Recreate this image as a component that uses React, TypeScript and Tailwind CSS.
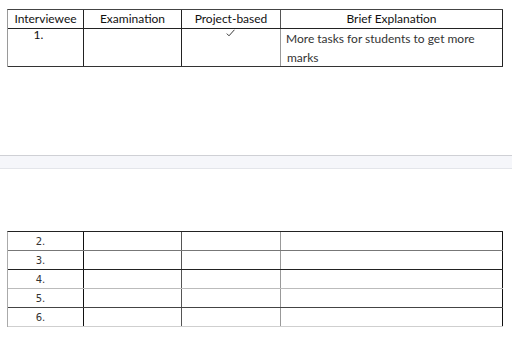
import React from "react";

const top = { fontFamily: "Lato, 'Open Sans', sans-serif" };
const dv = { fontFamily: "'DejaVu Sans', Verdana, sans-serif" };

export default function App() {
  const hRow = "h-[18px] flex items-center justify-center text-[12px] leading-[18px] text-[#111]";
  const rows: { n: string; b: string }[] = [
    { n: "2.", b: "border-b-[#777]" },
    { n: "3.", b: "border-b-[#222]" },
    { n: "4.", b: "border-b-[#bbb]" },
    { n: "5.", b: "border-b-[#444]" },
    { n: "6.", b: "border-b-[#cfcfcf]" },
  ];
  return (
    <div className="w-[512px] h-[339px] bg-white overflow-hidden relative">
      <div className="pt-[9px] pl-[7px]" style={top}>
        <div className="w-[496px] border-t border-l border-t-[#444] border-l-[#9a9a9a]">
          <div className="flex border-b border-b-[#222]">
            <div className={`w-[76px] border-r border-r-[#222] ${hRow}`}>Interviewee</div>
            <div className={`w-[98px] border-r border-r-[#222] ${hRow}`}>Examination</div>
            <div className={`w-[99px] border-r border-r-[#555] ${hRow}`}>Project-based</div>
            <div className={`w-[222px] border-r border-r-[#222] ${hRow}`}>Brief Explanation</div>
          </div>
          <div className="flex border-b border-b-[#333] h-[38px]">
            <div className="w-[76px] border-r border-r-[#222] flex justify-center pr-[14px] pt-[1px] text-[12px] leading-[10px] text-[#111]">1.</div>
            <div className="w-[98px] border-r border-r-[#222]"></div>
            <div className="w-[99px] border-r border-r-[#999] flex justify-center pt-[0px]">
              <svg width="9" height="8" viewBox="0 0 9 8" className="mt-[0px] ml-[-2px]">
                <path d="M0.8 4.6 L3 6.8 L8.4 0.8" fill="none" stroke="#222" strokeWidth="0.9" />
              </svg>
            </div>
            <div className="w-[222px] border-r border-r-[#222] pl-[5px] text-[12px] leading-[20px] text-[#333] pt-[0px]">
              <div>More tasks for students to get more</div>
              <div className="pl-[1px] leading-[18px]">marks</div>
            </div>
          </div>
        </div>
      </div>

      <div className="mt-[88px] h-[14px] border-t border-t-[#cfd0d5] border-b border-b-[#e3e5ea] bg-[#f5f6fa]"></div>

      <div className="mt-[62px] pl-[7px]" style={dv}>
        <div className="w-[496px] border-t border-l border-t-[#222] border-l-[#aaa]">
          {rows.map((r) => (
            <div key={r.n} className={`flex h-[19px] border-b ${r.b}`}>
              <div className="w-[76px] border-r border-r-[#111] flex items-center justify-center pr-[10px] text-[10px] text-[#333]">{r.n}</div>
              <div className="w-[98px] border-r border-r-[#555]"></div>
              <div className="w-[99px] border-r border-r-[#999]"></div>
              <div className="w-[222px] border-r border-r-[#111]"></div>
            </div>
          ))}
        </div>
      </div>
    </div>
  );
}
